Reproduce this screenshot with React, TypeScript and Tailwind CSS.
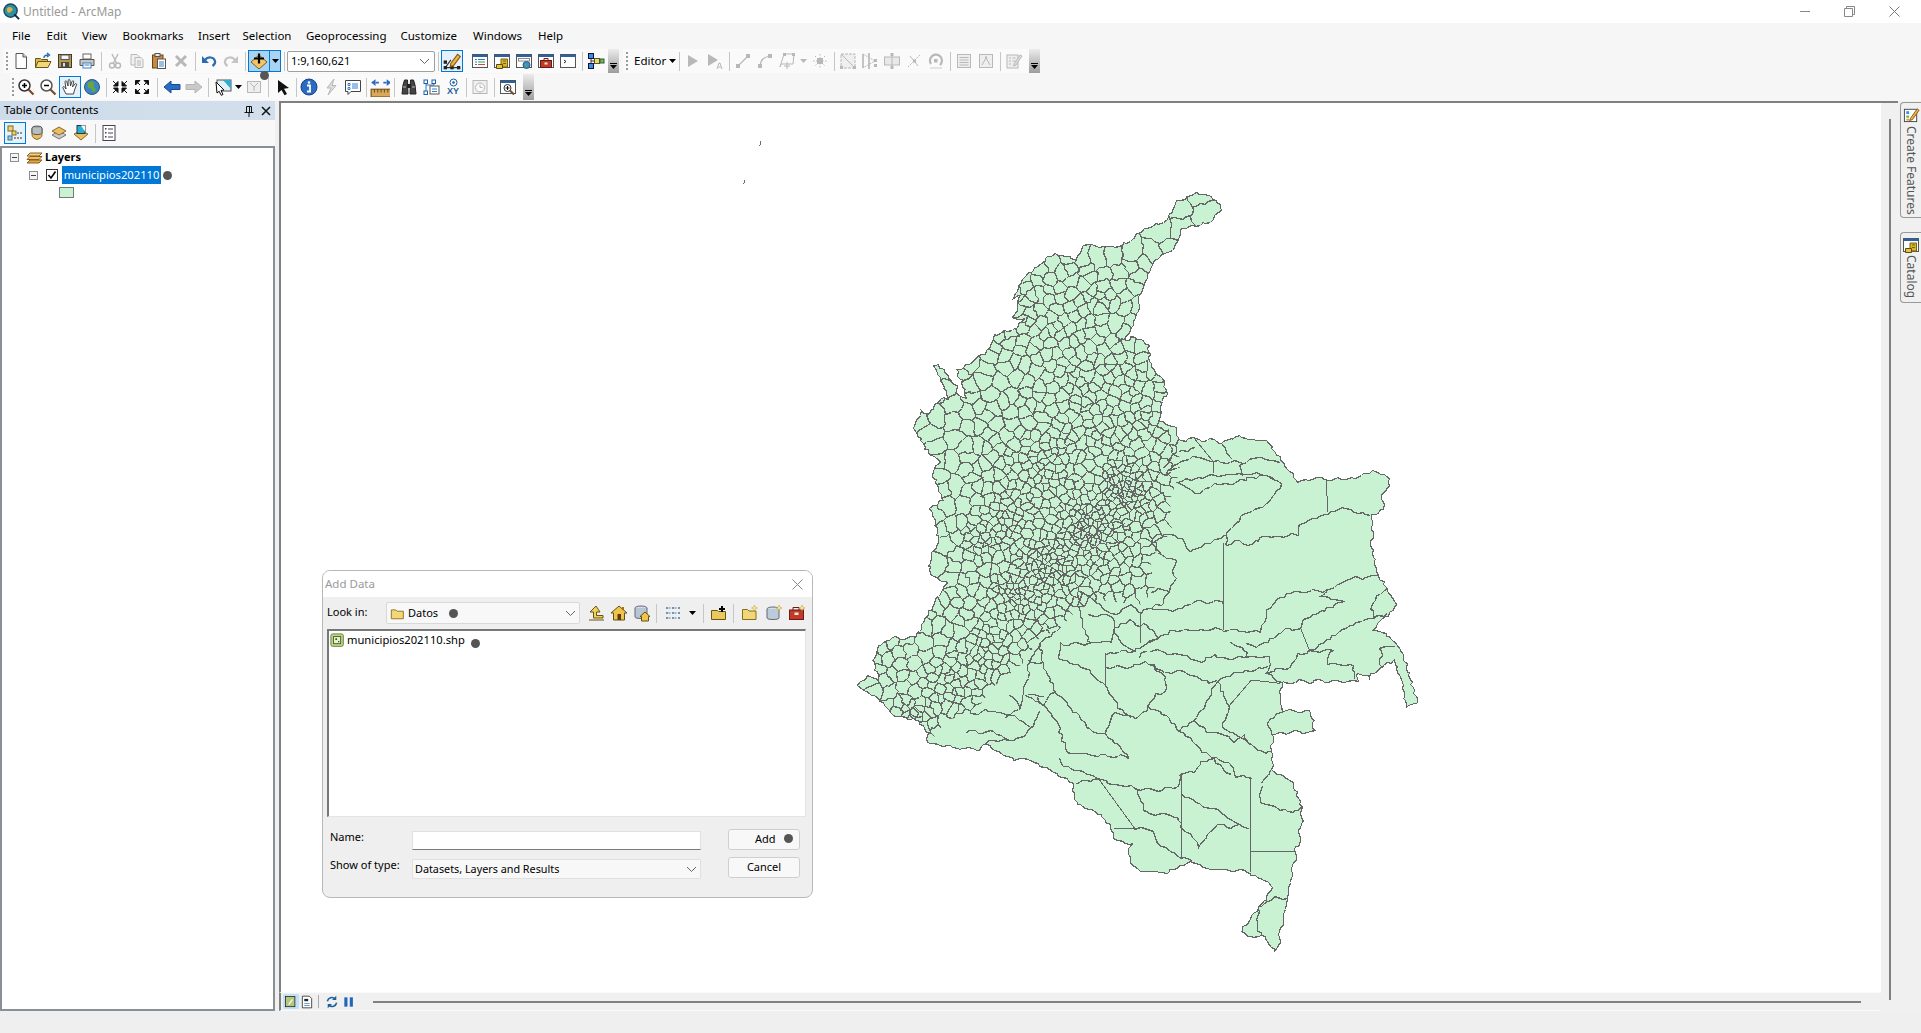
import React, { useMemo } from "react";

type Pt = [number, number];
const tr = (ox: number, oy: number, sx: number, sy: number) => (a: number[]): Pt[] => {
  const o: Pt[] = [];
  for (let i = 0; i < a.length; i += 2) o.push([ox + a[i] / sx, oy + a[i + 1] / sy]);
  return o;
};
const z7 = tr(850, 170, 3, 3);
const z9 = tr(1150, 400, 3, 3);
const z8 = tr(840, 560, 2.613, 3);

const OUTLINE: Pt[] = [
  ...z7([1040,65,1080,75,1100,95,1112,120,1085,150,1030,170,995,170,965,245,930,250,905,285,890,315,870,365,860,440,835,490,810,515,855,500,890,525,905,590,940,625,945,675,930,700,930,755,970,765]),
  ...z9([85,118,135,115,215,125,265,110,355,125,395,180,445,245,490,232,560,237,610,232,665,215,712,225,720,255,695,285,695,330,665,345,665,460,685,525,710,562,740,615,665,690,705,695,755,750,770,810,805,905,770,918,765,895,735,780,695,800,660,830,625,815,620,843,450,843,390,848]),
  ...z8([1150,450,1225,453,1237,480,1237,515,1180,515,1128,522,1128,625,1180,670,1205,740,1205,790,1140,1175,1105,1125,1075,1130,1048,1118,1125,985,1120,965,1070,935,965,925,920,900,850,938,780,930,752,900,760,850,710,830,710,800,680,765,620,735,605,670,510,605,440,590,375,545,365,568,280,560,230,543,230,515,205,485,140,460,110,430,50,375,70,350,100,355,88,300,100,260,135,235,200,230,215,185,230,150,250,125,280,70,240,40,232,15]),
  ...z7([235,1190,265,1100,240,1015,280,990,245,915,265,870,235,850,190,775,210,715,235,735,270,685,295,680,270,630,250,590,265,580,320,650,325,680,345,680,335,640,320,597,365,575,420,530,440,490,500,475,520,445,490,440,510,370,490,380,520,320,610,252,680,265,695,225,740,225,780,230,830,220,880,175,945,155,975,100]),
];

const RIVERS: Pt[][] = [
  [660,345,575,320,520,345,450,372,440,400,400,410,340,408,305,432,265,422,222,432,232,392,280,345,350,312,390,250],
  [390,250,340,222,260,245,190,255,135,283,95,255,85,245,160,228,240,222,340,220,380,245],
  [685,525,600,535,530,570,430,575,380,600,350,630,330,690,290,695,210,685,130,690,70,690,0,725],
  [242,725,290,755,285,770,360,770,350,820,390,848],
  [0,625,70,630,130,605,210,605,220,615],
  [75,480,65,515,75,530,55,570,40,610],
  [0,570,50,570],
  [122,452,230,400],
  [122,452,95,420,45,400,13,420,30,465,75,480],
  [578,600,510,590,530,570],
  [578,600,510,635,452,665,452,685,405,690,370,712,330,735,290,735],
  [480,755,575,690,620,670,665,650,710,640],
  [480,755,545,748,530,790,610,795,610,830],
  [480,755,440,760,415,805,355,810,350,820],
  [710,562,665,610,670,650,710,640],
  [690,740,690,790,695,800],
  [690,740,730,738],
  [0,750,100,765,150,785,190,765,210,775,280,770],
  [0,790,40,820],
  [40,820,90,808,180,845,250,820,350,800],
  [85,118,75,155,45,200],
  [85,155,135,140],
  [190,185,275,185,270,225],
  [275,190,310,170,395,185],
  [215,125,230,155,245,180],
  [45,220,80,190,140,165,190,185],
].map(z9).concat([
  [845,130,785,155,755,130,720,160],
  [715,205,755,180,785,200,790,190,830,230],
  [715,205,735,250,765,270,830,230],
  [695,280,765,270],
  [695,320,760,320,800,305,845,345],
  [775,295,800,270],
  [845,345,855,390,825,400,805,440,770,475,715,455,695,520,660,515,610,450,560,395,530,310,520,250,575,205],
  [570,290,575,250,655,250,710,240,715,205],
  [695,380,650,330,570,290],
  [695,380,730,440,760,475],
  [805,440,840,460,890,510,945,570,1020,610,1030,645,1075,655],
  [985,365,950,445,890,510],
  [985,365,1015,440,1000,500,1065,550,1110,580,1127,570],
  [920,480,955,515,1005,520,1030,540,1055,520,1065,550],
  [695,520,755,590,680,585,590,575,570,490,530,430,515,410],
  [570,590,575,610,670,655,750,680,830,690,880,680,890,640,925,635,945,600,975,600,1020,640],
  [610,670,675,655],
  [770,680,800,755,880,770,890,800,940,855,980,795,1070,800],
  [893,700,945,740,985,745,1040,790],
  [770,805,810,805,830,850,890,895,920,900],
  [1090,1040,1135,1015,1168,1012],
  [1100,680,1095,730,1125,735,1180,755,1205,740],
  [500,505,470,535,380,545],
  [330,515,400,515,440,535],
  [1127,625,1100,665],
  [1150,450,1115,485,1128,522],
  [1090,1040,1090,1110,1105,1125],
  [620,100,630,190,655,250],
  [650,165,705,165,720,205],
  [620,85,700,155,720,160],
  [520,250,495,290,490,340,480,385,470,440],
  [530,310,490,300],
  [560,395,530,430,480,400],
  [345,460,400,450,470,480,500,505],
  [500,505,520,460],
  [490,400,530,410],
  [440,400,470,440,430,470],
].map(z8));

const STRAIGHT: Pt[][] = [
  z9([530,237,532,335]), z9([220,430,220,690]), z9([452,685,480,755]), z9([135,118,190,185,190,220]),
  z8([785,155,785,250]), z8([695,280,695,380]), z8([1015,440,1075,360,1150,370]),
  z8([675,655,770,805,715,805]), z8([893,640,893,895]), z8([1073,655,1073,935]), z8([1073,873,1188,873]),
];

const DENSE: Pt[] = [[1160,420],[1178,439],[1180,470],[1170,500],[1172,530],[1150,560],[1155,590],[1140,605],[1100,600],[1077,610],[1060,628],[1037,640],[1027,660],[993,687],[974,713],[947,720],[928,745],[850,700],[840,500],[1000,180],[1250,180]];

const wobble = (x: number, y: number): Pt => {
  const dx = 1.1 * Math.sin(0.83 * x + 0.47 * y) + 0.8 * Math.sin(0.29 * y - 0.41 * x + 1);
  const dy = 1.1 * Math.sin(0.71 * y - 0.37 * x + 2) + 0.8 * Math.sin(0.33 * x + 0.53 * y);
  return [x + dx, y + dy];
};
const rp = (p: Pt) => `${Math.round(p[0]) + 0.5} ${Math.round(p[1]) + 0.5}`;
const wavy = (pts: Pt[], closed = false, step = 4) => {
  let d = "";
  const list = closed ? [...pts, pts[0]] : pts;
  list.forEach((p, i) => {
    if (i === 0) { d += "M" + rp(wobble(p[0], p[1])); return; }
    const q = list[i - 1];
    const n = Math.max(1, Math.round(Math.hypot(p[0] - q[0], p[1] - q[1]) / step));
    for (let k = 1; k <= n; k++) {
      const x = q[0] + ((p[0] - q[0]) * k) / n;
      const y = q[1] + ((p[1] - q[1]) * k) / n;
      d += "L" + rp(wobble(x, y));
    }
  });
  return closed ? d + "Z" : d;
};
const inside = (x: number, y: number, poly: Pt[]) => {
  let c = false;
  for (let i = 0, j = poly.length - 1; i < poly.length; j = i++) {
    const [xi, yi] = poly[i], [xj, yj] = poly[j];
    if (yi > y !== yj > y && x < ((xj - xi) * (y - yi)) / (yj - yi) + xi) c = !c;
  }
  return c;
};
const SPOTS = [[1125,490,30,1],[1090,530,38,1],[1050,565,36,0.95],[1015,590,30,0.9],[1010,520,28,0.8],[985,540,22,0.8],[1040,470,34,0.7],[1090,440,40,0.6],[915,715,14,1],[950,680,26,0.7],[985,650,25,0.75],[1080,385,40,0.45],[1040,320,40,0.4],[1115,380,25,0.5],[1140,420,20,0.6],[1075,300,30,0.45]];
const radius = (x: number, y: number) => {
  let g = 0;
  for (const [a, b, s, w] of SPOTS) g = Math.max(g, w * Math.exp(-((x - a) ** 2 + (y - b) ** 2) / (2 * s * s)));
  const base = y < 255 ? 34 : x < 965 && y < 590 ? 24 : 18;
  return base * (1 - g) + 3.5 * g;
};
function buildCells() {
  let st = 123456;
  const rnd = () => {
    st |= 0; st = (st + 0x6d2b79f5) | 0;
    let t = Math.imul(st ^ (st >>> 15), 1 | st);
    t = (t + Math.imul(t ^ (t >>> 7), 61 | t)) ^ t;
    return ((t ^ (t >>> 14)) >>> 0) / 4294967296;
  };
  const seeds: Pt[] = [];
  for (let i = 0; i < 36000; i++) {
    const x = 850 + rnd() * 380, y = 190 + rnd() * 570;
    if (!inside(x, y, DENSE) || !inside(x, y, OUTLINE)) continue;
    const r = (radius(x, y) * (0.5 + 0.65 * rnd())) ** 2;
    let ok = true;
    for (const s of seeds) {
      if ((s[0] - x) ** 2 + (s[1] - y) ** 2 < r) { ok = false; break; }
    }
    if (ok) seeds.push([x, y]);
  }
  let d = "";
  for (const s of seeds) {
    const near = seeds.filter((q) => q !== s).map((q) => ({ q, v: (q[0] - s[0]) ** 2 + (q[1] - s[1]) ** 2 })).sort((a, b) => a.v - b.v).slice(0, 22);
    let poly: Pt[] = [[s[0] - 60, s[1] - 60], [s[0] + 60, s[1] - 60], [s[0] + 60, s[1] + 60], [s[0] - 60, s[1] + 60]];
    for (const { q } of near) {
      const mx = (s[0] + q[0]) / 2, my = (s[1] + q[1]) / 2, nx = q[0] - s[0], ny = q[1] - s[1];
      const f = (p: Pt) => (p[0] - mx) * nx + (p[1] - my) * ny;
      const out: Pt[] = [];
      poly.forEach((p, i) => {
        const n = poly[(i + 1) % poly.length];
        const a = f(p), b = f(n);
        if (a <= 0) out.push(p);
        if (a < 0 !== b < 0) { const t = a / (a - b); out.push([p[0] + (n[0] - p[0]) * t, p[1] + (n[1] - p[1]) * t]); }
      });
      poly = out;
      if (!poly.length) break;
    }
    if (poly.length) d += wavy(poly, true, 4);
  }
  return d;
}
const path = (pts: Pt[]) => "M" + pts.map((p) => `${p[0]} ${p[1]}`).join("L");

function MapDrawing() {
  const cells = useMemo(buildCells, []);
  const outline = useMemo(() => wavy(OUTLINE, true, 3), []);
  const rivers = useMemo(() => RIVERS.map((r) => wavy(r, false, 4)).join(""), []);
  const straight = useMemo(() => STRAIGHT.map(path).join(""), []);
  return (
    <svg width={1598} height={889} viewBox="281 103 1598 889" className="block" shapeRendering="crispEdges">
      <defs>
        <clipPath id="cn"><path d={outline} /></clipPath>
        <clipPath id="dn"><path d={path(DENSE) + "Z"} /></clipPath>
      </defs>
      <path d={outline} fill="#c8f2d2" />
      <g clipPath="url(#cn)" fill="none" stroke="#666666" strokeWidth="1.3">
        <g clipPath="url(#dn)"><path d={cells} /></g>
        <path d={rivers} />
        <path d={straight} strokeWidth="1" />
      </g>
      <path d={outline} fill="none" stroke="#666666" strokeWidth="1.2" />
      <path d="M760 141l1 3-2 2M744 180l1 2-2 2" fill="none" stroke="#6e6e6e" />
    </svg>
  );
}

const S = ({ children, s = 18 }: { children: React.ReactNode; s?: number }) => (
  <svg width={s} height={s} viewBox="0 0 18 18" className="block shrink-0">{children}</svg>
);
const Win = ({ children }: { children?: React.ReactNode }) => (
  <g><rect x="1.5" y="2.5" width="15" height="13" fill="#fff" stroke="#555" /><rect x="1.5" y="2.5" width="15" height="2.5" fill="#2f5f9e" />{children}</g>
);
const Folder = () => <path d="M1.5 15.5v-10h5l1.5 1.500h7v8.500z" fill="#f1d777" stroke="#8a6d1c" />;
const Stack = ({ c = "#e9bd62" }: { c?: string }) => (
  <g><path d="M9 7l7 4-7 4-7-4z" fill="#c9c9c9" stroke="#777" /><path d="M9 3l7 4-7 4-7-4z" fill={c} stroke="#8c6b24" /></g>
);
const G = "#b8b8b8";
const Ic: Record<string, React.ReactNode> = {
  new: <S><path d="M4 1.500h7l3.500 3.500v11.500H4z" fill="#fff" stroke="#555" /><path d="M11 1.500V5h3.500" fill="#ddd" stroke="#555" /></S>,
  open: <S><path d="M1.500 15.500v-9h5l1 1h6v8z" fill="#d9b84c" stroke="#6f5514" /><path d="M1.500 15.500l2.500-6h13l-3 6z" fill="#f0d77a" stroke="#6f5514" /><path d="M10 6c0-2 1.500-3 4-3M13 1l2.500 2-2.500 2" fill="none" stroke="#2a6cb0" strokeWidth="1.400" /></S>,
  save: <S><rect x="2.500" y="2.500" width="13" height="13" fill="#b99a45" stroke="#3a3a3a" /><rect x="5" y="3" width="8" height="4.500" fill="#f4f4f4" stroke="#555" /><rect x="5" y="10" width="8" height="5.500" fill="#4b4b4b" /><rect x="7" y="11" width="2" height="3.500" fill="#ddd" /></S>,
  print: <S><rect x="5" y="2" width="8" height="5" fill="#fff" stroke="#666" /><path d="M2 7.500h14v6H2z" fill="#c7c7c7" stroke="#555" /><rect x="5" y="11" width="8" height="5" fill="#fff" stroke="#3b7fc4" /><path d="M6.500 13h5" stroke="#3b7fc4" /></S>,
  cut: <S><path d="M6 2l4.500 9M12 2L7.500 11" stroke={G} strokeWidth="1.400" fill="none" /><circle cx="6" cy="13.500" r="2.500" fill="none" stroke={G} strokeWidth="1.400" /><circle cx="12" cy="13.500" r="2.500" fill="none" stroke={G} strokeWidth="1.400" /></S>,
  copy: <S><path d="M3 2.500h6l2 2v8.500H3z" fill="#f1f1f1" stroke={G} /><path d="M7 5.500h6l2 2v8H7z" fill="#f1f1f1" stroke={G} /><path d="M9 9h4M9 11h4M9 13h4" stroke={G} /></S>,
  paste: <S><rect x="2.500" y="3" width="10.500" height="13" fill="#c98a3d" stroke="#6b4516" /><rect x="5" y="1.500" width="5" height="3" fill="#e9e9e9" stroke="#555" /><rect x="7.500" y="7" width="8" height="9.500" fill="#fff" stroke="#555" /><path d="M9 10h5M9 12h5M9 14h5" stroke="#3b7fc4" /></S>,
  del: <S><path d="M4 4l10 10M14 4L4 14" stroke={G} strokeWidth="3" /></S>,
  undo: <S><path d="M5 8c3-4 9-3 10 1 .5 2-1 4-2.500 5" fill="none" stroke="#2a6cb0" strokeWidth="2.200" /><path d="M2 4v7h7z" fill="#2a6cb0" /></S>,
  redo: <S><path d="M13 8c-3-4-9-3-10 1-.5 2 1 4 2.500 5" fill="none" stroke="#c4c4c4" strokeWidth="2.200" /><path d="M16 4v7H9z" fill="#c4c4c4" /></S>,
  add: <S><path d="M9 3l8 7-8 7-8-7z" fill="#f2c566" stroke="#7d5e1b" /><path d="M9 1.500v10M4 6.500h10" stroke="#000" strokeWidth="2.200" /></S>,
  editor: <S s={20}><path d="M3 15L8 15 14 15M3 15L8 8" stroke="#333" fill="none" /><rect x="1.500" y="8.500" width="3" height="3" fill="#222" /><rect x="1.500" y="13.500" width="3" height="3" fill="#222" /><rect x="7.500" y="13.500" width="3" height="3" fill="#222" /><rect x="13.500" y="13.500" width="3" height="3" fill="#222" /><path d="M8 11l6-8 2.500 2-6 8-3 1z" fill="#eeb44a" stroke="#8a5b12" /></S>,
  toc: <S><Win><path d="M4 7.500h2M4 10h2M4 12.500h2" stroke="#2f7fd0" /><path d="M7 7.500h7" stroke="#2f7fd0" /><path d="M7 10h7" stroke="#37a04a" /><path d="M7 12.500h7" stroke="#d24a3d" /></Win></S>,
  cat: <S><Win><path d="M8 7h6.500v8H8z" fill="#d9b52c" stroke="#7a6310" /><path d="M3.500 12.500h6v4h-6z" fill="#e6c53a" stroke="#5a4a10" /><path d="M10 9h3M10 11.500h3" stroke="#7a6310" /></Win></S>,
  search: <S><Win><rect x="3.500" y="6.500" width="11" height="2.500" fill="#fff" stroke="#8a8a8a" /><circle cx="11.500" cy="13" r="3.500" fill="#3b8fc4" stroke="#2a5a7c" /><path d="M10 11.500l2 1.500-1 2z" fill="#6bb04a" /></Win></S>,
  tool: <S><Win><rect x="3.500" y="8.500" width="11" height="7" fill="#c2392b" stroke="#6d1a12" /><path d="M7 8.500v-2h4v2" fill="none" stroke="#6d1a12" /><rect x="7.500" y="10.500" width="3" height="2" fill="#eec" /></Win></S>,
  py: <S><Win><path d="M5 8l2 1.500L5 11" fill="none" stroke="#222" /></Win></S>,
  model: <S><rect x="1.500" y="1.500" width="5" height="5" fill="#3a8fe0" stroke="#114" /><rect x="1.500" y="11.500" width="5" height="5" fill="#3a8fe0" stroke="#114" /><rect x="7.500" y="6.500" width="5" height="5" fill="#f2d94f" stroke="#554" /><rect x="13" y="7" width="4" height="4" fill="#6cc04a" stroke="#354" /><path d="M4 6.500v5M4 9h3.500" stroke="#333" /></S>,
  zin: <S><circle cx="7.500" cy="7.500" r="5.500" fill="#fff" stroke="#333" strokeWidth="1.500" /><path d="M5 7.500h5M7.500 5v5" stroke="#000" strokeWidth="1.500" /><path d="M11.500 11.500l5 5" stroke="#7a4a2a" strokeWidth="2.200" /></S>,
  zout: <S><circle cx="7.500" cy="7.500" r="5.500" fill="#fff" stroke="#555" strokeWidth="1.500" /><path d="M5 7.500h5" stroke="#000" strokeWidth="1.500" /><path d="M11.500 11.500l5 5" stroke="#7a4a2a" strokeWidth="2.200" /></S>,
  hand: <S><path d="M5 16L2 10c-.6-1.300 1-2 1.800-.8L5 11 4 4c-.2-1.300 1.500-1.500 1.800-.2L7 8l.2-5.500c0-1.300 1.800-1.300 1.800 0L9.500 8l1.500-4.500c.4-1.200 2-.8 1.700.5L11.500 9l2.500-3c.8-1 2-.1 1.500 1L13.500 12 12.500 16z" fill="#fff" stroke="#333" strokeWidth=".9" /></S>,
  globe: <S><circle cx="9" cy="9" r="7.500" fill="#3b87c6" stroke="#33566e" /><path d="M5 5c2-2 5-2 6 0s-1 2 0 4 3 2 1 4-3 1-3-1-3-1-4-3 0-2 0-4z" fill="#6aa63f" /></S>,
  fin: <S><path d="M2 3l5 5M7 3.500V8H2.500z" fill="#111" stroke="#111" /><path d="M16 3l-5 5M11 3.500V8h4.500z" fill="#111" stroke="#111" /><path d="M2 15l5-5M7 14.500V10H2.500z" fill="#111" stroke="#111" /><path d="M16 15l-5-5M11 14.500V10h4.500z" fill="#111" stroke="#111" /></S>,
  fout: <S><path d="M7 7L3 3M2.500 7V2.500H7z" fill="#111" stroke="#111" /><path d="M11 7l4-4M15.500 7V2.500H11z" fill="#111" stroke="#111" /><path d="M7 11l-4 4M2.500 11v4.500H7z" fill="#111" stroke="#111" /><path d="M11 11l4 4M15.500 11v4.500H11z" fill="#111" stroke="#111" /></S>,
  back: <S><path d="M1 9l7-6v3.500h9v5H8V15z" fill="#2a6cc4" stroke="#1a4a90" /></S>,
  fwd: <S><path d="M17 9l-7-6v3.500H1v5h9V15z" fill="#c9c9c9" stroke="#b5b5b5" /></S>,
  sel: <S><rect x="3" y="2" width="14" height="11" fill="#dff0f7" stroke="#555" /><path d="M9 2h8v9z" fill="#36a9cf" /><path d="M2 4l8 8-3 .5 2 4-1.800.8-2-4L3 15z" fill="#fff" stroke="#111" /></S>,
  clr: <S><rect x="2.500" y="3.500" width="13" height="11" fill="#eee" stroke={G} /><path d="M5 5l4 4 4-4M9 9v4" fill="none" stroke={G} /></S>,
  arrow: <S><path d="M4 2l11 8-5 .8 3 5.200-2.500 1.300-3-5.300L4 15z" fill="#111" /></S>,
  info: <S><circle cx="9" cy="9" r="8" fill="#2a6cc4" stroke="#1a4080" /><path d="M7 7.500h3v6h1M7 13.500h4" fill="none" stroke="#fff" strokeWidth="1.800" /><circle cx="9" cy="4.500" r="1.300" fill="#fff" /></S>,
  light: <S><path d="M12 1L5 10h4l-3 7 8-9.500h-4z" fill="#ddd" stroke={G} /></S>,
  html: <S><path d="M1.500 2.500h15v11H7l-3 3v-3H1.500z" fill="#fff" stroke="#444" /><path d="M4 5.500h2v2H4zM4 9.500h2v2H4z" fill="none" stroke="#2f7fd0" /><path d="M8 6h6M8 8h6M8 10h6" stroke="#2f7fd0" /></S>,
  measure: <S s={20}><rect x="1" y="11" width="18" height="7" fill="#d9a85a" stroke="#70501c" /><path d="M4 11v3M7 11v3M10 11v3M13 11v3M16 11v3" stroke="#70501c" /><path d="M1 5l4-3v6zM19 5l-4-3v6z" fill="#2a6cc4" /><path d="M5 5h3M12 5h3" stroke="#2a6cc4" strokeWidth="1.500" /></S>,
  bino: <S><path d="M2 16l1-9 1.500-5h3L8 16zM16 16l-1-9-1.500-5h-3L10 16z" fill="#444" stroke="#222" /><path d="M7 6h4v4H7z" fill="#222" /><path d="M3 9h3M12 9h3" stroke="#bbb" /></S>,
  route: <S><path d="M4 4v9M4 7h8v-3" fill="none" stroke="#2f7fd0" /><rect x="2" y="2" width="3.500" height="3.500" fill="#fff" stroke="#1d5fa8" /><rect x="2" y="13" width="3.500" height="3.500" fill="#fff" stroke="#1d5fa8" /><rect x="10" y="2" width="3.500" height="3.500" fill="#fff" stroke="#1d5fa8" /><rect x="8" y="8" width="9" height="8" fill="#fff" stroke="#555" /><path d="M10 11h5M10 13.500h5" stroke="#2f7fd0" /></S>,
  time: <S><rect x="2" y="2.500" width="14" height="13" fill="#f0f0f0" stroke={G} /><circle cx="9" cy="9.500" r="4.500" fill="#fafafa" stroke={G} /><path d="M9 6.500v3h2.500" fill="none" stroke={G} /></S>,
  viewer: <S><Win><circle cx="8.500" cy="10" r="3.500" fill="#fff" stroke="#333" /><path d="M6.500 10h4M8.500 8v4" stroke="#111" /><path d="M11 12.500l4 4" stroke="#7a4a2a" strokeWidth="2" /></Win></S>,
  t1: <S><rect x="2" y="2" width="5" height="5" fill="#f5d267" stroke="#7a6a2a" /><rect x="6" y="7" width="4" height="4" fill="#f5d267" stroke="#7a6a2a" /><rect x="2" y="12" width="4" height="4" fill="#9ac7e0" stroke="#48708a" /><path d="M11 9h5M8 14h8" stroke="#333" strokeDasharray="2 1" /></S>,
  t2: <S><path d="M4 4.500v6c0 3 2 4 5 5 3-1 5-2 5-5v-6z" fill="#e9bd62" stroke="#8c6b24" /><ellipse cx="9" cy="4" rx="5" ry="2" fill="#a8a8a8" stroke="#555" /><path d="M4 4v5c0 2 10 2 10 0V4" fill="#b9bcc0" stroke="#555" /></S>,
  t3: <S><Stack /></S>,
  t4: <S><path d="M2 10l7 6 7-6-4-2v-2H6v2z" fill="#e9bd62" stroke="#8c6b24" /><rect x="5" y="1.500" width="8" height="8" fill="#26b0d8" stroke="#333" /><path d="M9 1.500h4v6z" fill="#fff" /></S>,
  t5: <S><rect x="3" y="1.500" width="12" height="15" fill="#fff" stroke="#445" /><path d="M8 5h5M8 9h5M8 13h5" stroke="#445" /><rect x="5" y="4" width="1.500" height="1.500" fill="#445" /><rect x="5" y="8" width="1.500" height="1.500" fill="#445" /><rect x="5" y="12" width="1.500" height="1.500" fill="#445" /></S>,
  layers: <S s={18}><path d="M2 15l3-3h12l-3 3z" fill="#e0a64a" stroke="#8a5f1c" /><path d="M2 11.500l3-3h12l-3 3z" fill="#efbf6c" stroke="#8a5f1c" /><path d="M2 8l3-3h12l-3 3z" fill="#f4cd80" stroke="#8a5f1c" /></S>,
  up: <S><path d="M9 2L3 8h3.500v6H16v-2.500H9.500V8H13z" fill="#f0d25a" stroke="#6a5510" /><path d="M2 16h15" stroke="#6a5510" /></S>,
  home: <S><path d="M9 2L1 9h2.500v7h11V9H17z" fill="#edc54c" stroke="#6a4e10" /><rect x="7.500" y="10" width="3.500" height="6" fill="#5b3b10" /><rect x="12" y="3" width="2" height="3" fill="#a0701c" /></S>,
  gdbh: <S><ellipse cx="8" cy="4" rx="6" ry="2" fill="#cfdbe6" stroke="#667" /><path d="M2 4v9c0 2 12 2 12 0V4" fill="#b7c5d2" stroke="#667" /><path d="M12 8l-5 4.500h1.500V17h7v-4.500H17z" fill="#edc54c" stroke="#6a4e10" /></S>,
  list: <S><path d="M2 3h2v2H2zM2 8h2v2H2zM2 13h2v2H2zM8 3h2v2H8zM8 8h2v2H8zM8 13h2v2H8zM14 3h2v2h-2zM14 8h2v2h-2zM14 13h2v2h-2z" fill="#7b93a8" /><path d="M4.500 4h2M4.500 9h2M4.500 14h2M10.500 4h2M10.500 9h2M10.500 14h2" stroke="#3b7fc4" /></S>,
  conn: <S><path d="M1.500 15.500v-9h6l1 1h7v8z" fill="#e7c95f" stroke="#6a5510" /><path d="M9 5h6M12 2v6" stroke="#000" strokeWidth="2" /></S>,
  nfold: <S><Folder /><path d="M13.500 1l.8 2.200 2.200.8-2.200.8-.8 2.200-.8-2.200-2.200-.8 2.200-.8z" fill="#fff2a0" stroke="#b59a20" strokeWidth=".5" /></S>,
  ndb: <S><ellipse cx="8" cy="5" rx="6" ry="2" fill="#d3deea" stroke="#667" /><path d="M2 5v9c0 2 12 2 12 0V5" fill="#bccbd8" stroke="#667" /><path d="M14 1l.8 2.200 2.200.8-2.200.8-.8 2.200-.8-2.200-2.200-.8 2.200-.8z" fill="#fff2a0" stroke="#b59a20" strokeWidth=".5" /></S>,
  ntool: <S><rect x="1.500" y="6" width="14" height="9.500" fill="#c2392b" stroke="#6d1a12" /><path d="M5 6V3.500h6V6" fill="none" stroke="#6d1a12" /><rect x="6.500" y="8.500" width="4" height="2.500" fill="#eec" /><path d="M14 1l.8 2.200 2.200.8-2.200.8-.8 2.200-.8-2.200-2.200-.8 2.200-.8z" fill="#fff2a0" stroke="#b59a20" strokeWidth=".5" /></S>,
  shp: <S s={16}><rect x="1" y="1" width="14" height="14" rx="2" fill="#bcd58e" stroke="#5d7a2c" /><rect x="4" y="4" width="8" height="8" fill="#e6efce" stroke="#46591f" /><path d="M6 6h2v2H6zM9 9h1.500v1.500H9z" fill="#46591f" /></S>,
  view1: <S s={14}><rect x="2" y="2" width="12" height="13" fill="#b6c77a" stroke="#222" /><path d="M5 12l5-7 2 1-5 7z" fill="#e8f0d0" /></S>,
  view2: <S s={14}><path d="M3 1.500h9l3 3v12H3z" fill="#fff" stroke="#222" /><path d="M5.500 5h5v3h-5z" fill="#222" /><path d="M5.500 11h7M5.500 13.500h7" stroke="#3b7fc4" /></S>,
  refresh: <S s={14}><path d="M3 8a6 6 0 0 1 10-3M15 10a6 6 0 0 1-10 3" fill="none" stroke="#1b5f9e" strokeWidth="2" /><path d="M14.500 1v5.500H9zM3.500 17v-5.500H9z" fill="#1b5f9e" /></S>,
  pause: <S s={14}><rect x="3" y="3" width="4" height="12" fill="#2266b8" /><rect x="10" y="3" width="4" height="12" fill="#2266b8" /></S>,
  feat: <S s={17}><rect x="1.500" y="3.500" width="13" height="13" fill="#fff" stroke="#445" /><path d="M3.500 5.500h3v3h-3z" fill="#3a8fe0" /><path d="M3.500 10h3v2.500h-3z" fill="#6cc04a" /><path d="M3.500 13.500h3v2h-3z" fill="#e0a030" /><path d="M8 13l7-10 2 1.500-7 10-3 .8z" fill="#eeb44a" stroke="#8a5b12" /></S>,
  e1: <S><path d="M4 3l10 6-10 6z" fill={G} /></S>,
  e2: <S><path d="M2 2l10 6-10 6z" fill={G} /><path d="M11 17l2-6h1l2 6M12 15h3" fill="none" stroke={G} /></S>,
  e3: <S><path d="M4 14L14 4" stroke={G} strokeWidth="1.200" /><rect x="2" y="12" width="4" height="4" fill={G} /><rect x="12" y="2" width="4" height="4" fill={G} /></S>,
  e4: <S><path d="M4 14C5 7 8 5 14 4" stroke={G} fill="none" strokeWidth="1.200" /><rect x="2" y="12" width="4" height="4" fill={G} /><rect x="12" y="2" width="4" height="4" fill={G} /></S>,
  e5: <S><path d="M6 2h10l-1 10H3l-1 3z" fill="none" stroke={G} /><path d="M9 10v7M6 14h6" stroke={G} /><rect x="5" y="1" width="3" height="3" fill={G} /><rect x="14" y="1" width="3" height="3" fill={G} /></S>,
  e6: <S><path d="M9 2v14M2 9h14M4 4l10 10M14 4L4 14" stroke={G} strokeDasharray="1.500 1.500" /><rect x="6" y="6" width="6" height="6" fill={G} /></S>,
  e7: <S><path d="M2 2h14v14H2z" fill="#efefef" stroke={G} strokeDasharray="3 1" /><path d="M2 2l14 14" stroke={G} /><rect x="1" y="14" width="3" height="3" fill={G} /><rect x="14" y="14" width="3" height="3" fill={G} /></S>,
  e8: <S><path d="M2 2v14M8 1v16" stroke="#8d8d8d" /><path d="M2 2l12 7-12 7" fill="none" stroke={G} strokeDasharray="2 1" /><rect x="13" y="7" width="3" height="3" fill={G} /><rect x="13" y="12" width="3" height="3" fill={G} /></S>,
  e9: <S><rect x="1.500" y="5" width="15" height="8" fill="#e9e9e9" stroke={G} /><path d="M9 2v14" stroke={G} /><rect x="7.500" y="1" width="3" height="3" fill={G} /><rect x="7.500" y="14" width="3" height="3" fill={G} /></S>,
  e10: <S><path d="M3 15L15 3" stroke={G} strokeDasharray="2 1" /><path d="M5 4l8 10" stroke={G} /><rect x="8" y="7.500" width="3" height="3" fill={G} /></S>,
  e11: <S><path d="M4 12A6 6 0 1 1 13 13" fill="none" stroke={G} strokeWidth="2.200" /><rect x="7" y="7" width="3.500" height="3.500" fill={G} /><path d="M3 16h12" stroke="#ddd" strokeWidth="1.500" /></S>,
  e12: <S><rect x="2.500" y="2.500" width="13" height="13" fill="#eee" stroke={G} /><path d="M4.500 5.500h9M4.500 8h9M4.500 10.500h9M4.500 13h9" stroke={G} /></S>,
  e13: <S><rect x="2.500" y="2.500" width="13" height="13" fill="#eee" stroke={G} /><path d="M5 13l4-7 4 7" fill="none" stroke={G} /><rect x="8" y="4.500" width="2" height="2" fill={G} /></S>,
  e14: <S><rect x="2" y="3" width="11" height="13" fill="#eee" stroke={G} /><path d="M4 6h2M4 9h2M4 12h2M7.500 6h3M7.500 9h3" stroke={G} /><path d="M9 12l6-9 2 1-6 9-2.500.8z" fill="#ddd" stroke={G} /></S>,
};

const Btn = ({ n, w = 22, active = false }: { n: string; w?: number; active?: boolean }) => (
  <div className={"h-[22px] shrink-0 flex items-center justify-center " + (active ? "border border-[#0078d7] bg-[#e5f1fb]" : "")} style={{ width: w }}>
    {Ic[n]}
  </div>
);
const Sep = ({ w = 6 }: { w?: number }) => (
  <div className="shrink-0 flex justify-center" style={{ width: w }}><div className="w-px h-[19px] bg-[#c6c6c6]" /></div>
);
const Caret = ({ c = "#000" }: { c?: string }) => (
  <svg width="9" height="5" viewBox="0 0 9 5" className="shrink-0"><path d="M1 0h7L4.500 4z" fill={c} /></svg>
);
const Chev = () => (
  <svg width="11" height="7" viewBox="0 0 11 7" className="shrink-0"><path d="M1 1l4.500 4.500L10 1" fill="none" stroke="#666" /></svg>
);
const Grip = ({ w = 7 }: { w?: number }) => (
  <div className="shrink-0 flex flex-col items-center gap-[2px]" style={{ width: w }}>
    {[0, 1, 2, 3, 4].map((i) => <div key={i} className="w-[2px] h-[2px] bg-[#9a9a9a]" />)}
  </div>
);
const Overflow = ({ cls }: { cls: string }) => (
  <div className={"w-[11px] shrink-0 bg-gradient-to-b from-[#ececec] to-[#9d9d9d] flex flex-col items-center justify-end pb-[3px] " + cls}>
    <div className="w-[7px] h-px bg-black mb-[1px]" />
    <Caret />
  </div>
);
const Dot = ({ cls = "" }: { cls?: string }) => <span className={"inline-block w-[9px] h-[9px] rounded-full bg-[#555] shrink-0 " + cls} />;
const Minus = () => (
  <div className="w-[9px] h-[9px] border border-[#8a8f96] bg-[#f4f4f4] flex items-center justify-center shrink-0"><div className="w-[5px] h-px bg-[#444]" /></div>
);

const menus: [string, number][] = [["File",34.5],["Edit",35.5],["View",40.5],["Bookmarks",75.5],["Insert",44.5],["Selection",63.5],["Geoprocessing",94.5],["Customize",72.5],["Windows",65],["Help",40]];

export default function App() {
  return (
    <div className="w-[1921px] h-[1033px] overflow-hidden bg-[#f0f0f0] flex flex-col relative text-black text-[11.5px] font-['Noto_Sans','Open_Sans',sans-serif]">
      <div className="h-[23px] bg-white flex items-center shrink-0">
        <div className="w-[23px] pl-[3px]">
          <svg width="17" height="17" viewBox="0 0 18 18" className="block"><circle cx="8" cy="8" r="7" fill="#2f8f9f" stroke="#124a6a" strokeWidth="1.500" /><path d="M4 6c2-3 5-2 6 0s-2 3-3 4-3 0-3-4z" fill="#d8b34a" /><path d="M12 12l5 5" stroke="#123" strokeWidth="2" /></svg>
        </div>
        <span className="text-[#9a9a9a] text-[12px]">Untitled - ArcMap</span>
        <div className="ml-auto flex items-center h-full pr-[3px]">
          <div className="w-[44px] flex justify-center"><div className="w-[10px] h-px bg-[#888]" /></div>
          <div className="w-[44px] flex justify-center"><svg width="11" height="11" viewBox="0 0 11 11"><path d="M.5 2.500h8v8h-8zM2.500 2.500v-2h8v8h-2" fill="none" stroke="#888" /></svg></div>
          <div className="w-[47px] flex justify-center"><svg width="11" height="11" viewBox="0 0 11 11"><path d="M.5.500l10 10M10.500.500l-10 10" stroke="#777" /></svg></div>
        </div>
      </div>
      <div className="h-[24px] shrink-0 bg-[#f6f6f6] flex items-center pl-[12px] pt-[1px]">
        {menus.map(([m, w]) => <div key={m} className="shrink-0" style={{ width: w }}>{m}</div>)}
      </div>
      <div className="h-[26px] shrink-0 bg-[#f6f6f6] flex items-end pl-[3px]">
        <div className="h-[24px] w-[605px] bg-[#fafafa] flex items-center shrink-0">
          <Grip />
          <Btn n="new" /><Btn n="open" /><Btn n="save" /><Btn n="print" /><Sep />
          <Btn n="cut" /><Btn n="copy" /><Btn n="paste" /><Btn n="del" /><Sep />
          <Btn n="undo" /><Btn n="redo" /><Sep />
          <div className="w-[22px] h-[22px] bg-[#a9d3f3] border border-[#0078d7] flex items-center justify-center shrink-0">{Ic.add}</div>
          <div className="w-[11px] h-[22px] bg-[#a9d3f3] border border-l-0 border-[#0078d7] flex items-center justify-center shrink-0"><Caret /></div>
          <Sep />
          <div className="w-[148px] h-[21px] bg-white border border-[#a0a0a0] rounded-[2px] flex items-center justify-between pl-[3px] pr-[4px] shrink-0">
            <span className="text-[11px]">1:9,160,621</span><Chev />
          </div>
          <Sep />
          <Btn n="editor" active />
          <div className="w-[6px] shrink-0" />
          <Btn n="toc" /><Btn n="cat" /><Btn n="search" /><Btn n="tool" /><Btn n="py" /><Sep />
          <Btn n="model" />
        </div>
        <Overflow cls="h-[24px] mr-[4px]" />
        <div className="h-[24px] w-[406px] bg-[#fafafa] flex items-center shrink-0">
          <Grip w={8} />
          <span className="ml-[3px]">Editor</span>
          <div className="ml-[2px]"><Caret /></div>
          <Sep w={5} />
          <Btn n="e1" /><Btn n="e2" /><Sep />
          <Btn n="e3" /><Btn n="e4" /><Btn n="e5" />
          <div className="mx-[1px]"><Caret c="#b8b8b8" /></div>
          <Btn n="e6" /><Sep />
          <Btn n="e7" /><Btn n="e8" /><Btn n="e9" /><Btn n="e10" /><Btn n="e11" /><Sep />
          <Btn n="e12" /><Btn n="e13" /><Sep /><Btn n="e14" />
        </div>
        <Overflow cls="h-[24px]" />
      </div>
      <div className="h-[28px] shrink-0 bg-[#f6f6f6] flex items-center pl-[10px] relative">
        <div className="h-[26px] w-[513px] bg-[#fafafa] flex items-center shrink-0">
          <Grip w={5} />
          <Btn n="zin" /><Btn n="zout" /><Btn n="hand" active /><Btn n="globe" /><Sep />
          <Btn n="fin" /><Btn n="fout" /><Sep w={8} />
          <Btn n="back" /><Btn n="fwd" /><Sep w={7} />
          <Btn n="sel" /><div className="w-[9px] shrink-0 flex justify-center"><Caret /></div>
          <Btn n="clr" /><Sep w={7} />
          <Btn n="arrow" /><Sep w={4} />
          <Btn n="info" /><Btn n="light" /><Btn n="html" /><Sep w={5} />
          <Btn n="measure" /><Sep w={7} />
          <Btn n="bino" /><Btn n="route" />
          <div className="w-[22px] h-[22px] shrink-0 flex flex-col items-center justify-center leading-none text-[#1b5f9e] font-bold text-[9px] font-['Liberation_Sans',sans-serif]">
            <svg width="9" height="9" viewBox="0 0 9 9"><circle cx="4.500" cy="4.500" r="3.500" fill="none" stroke="#1b5f9e" /><circle cx="4.500" cy="4.500" r="1.300" fill="#1b5f9e" /></svg>
            <span>XY</span>
          </div>
          <Sep w={5} /><Btn n="time" /><Sep w={6} /><Btn n="viewer" />
        </div>
        <Overflow cls="h-[26px]" />
        <Dot cls="absolute left-[260px] top-[-2px] z-10" />
      </div>
      <div className="flex-1 flex min-h-0">
        <div className="w-[275px] shrink-0 flex flex-col">
          <div className="h-[19px] shrink-0 bg-gradient-to-r from-[#cddbea] to-[#d3dfec] flex items-center pl-[4px] pr-[4px] justify-between text-[11.3px]">
            <span>Table Of Contents</span>
            <div className="flex items-center gap-[6px]">
              <svg width="12" height="12" viewBox="0 0 12 12"><path d="M3.500 1.500h5v6h-5zM1.500 7.500h9M6 7.500V12M6.500 1.500v6" fill="none" stroke="#111" /></svg>
              <svg width="10" height="10" viewBox="0 0 10 10"><path d="M1 1l8 8M9 1L1 9" stroke="#111" strokeWidth="1.500" /></svg>
            </div>
          </div>
          <div className="h-[26px] shrink-0 bg-[#f8f8f8] flex items-center pl-[4px]">
            <Btn n="t1" active /><Btn n="t2" /><Btn n="t3" /><Btn n="t4" /><Sep /><Btn n="t5" />
          </div>
          <div className="flex-1 bg-white border-2 border-[#8a8f96] pl-[8px] flex flex-col">
            <div className="h-[18px] flex items-center">
              <Minus />
              <div className="ml-[6px]">{Ic.layers}</div>
              <span className="ml-[2px] font-bold text-[11px]">Layers</span>
            </div>
            <div className="h-[18px] flex items-center pl-[19px]">
              <Minus />
              <div className="ml-[8px] w-[12px] h-[12px] border border-[#333] bg-white flex items-center justify-center shrink-0">
                <svg width="10" height="10" viewBox="0 0 10 10"><path d="M1.500 5l2.500 3 4.500-6.500" fill="none" stroke="#000" strokeWidth="1.600" /></svg>
              </div>
              <span className="ml-[4px] bg-[#0078d7] text-white h-[18px] w-[99px] flex items-center justify-center text-[11.2px]">municipios202110</span>
              <Dot cls="ml-[2px]" />
            </div>
            <div className="h-[14px] flex items-center pl-[49px] mt-[1px]">
              <div className="w-[15px] h-[11px] bg-[#c8f2d2] border border-[#777]" />
            </div>
          </div>
        </div>
        <div className="w-[4px] shrink-0" />
        <div className="w-[1602px] shrink-0 flex flex-col">
          <div className="flex-1 relative bg-white border-t-2 border-l-2 border-[#808080] overflow-hidden min-h-0">
            <MapDrawing />
            <div className="absolute left-[41px] top-[467px] w-[491px] h-[328px] rounded-[8px] border border-[#b8b8b8] bg-[#efefef] overflow-hidden flex flex-col text-[11px]">
              <div className="h-[26px] bg-white flex items-center justify-between pl-[2px] pr-[9px] shrink-0">
                <span className="text-[#9a9a9a] text-[11.5px]">Add Data</span>
                <svg width="11" height="11" viewBox="0 0 11 11"><path d="M.5.500l10 10M10.500.500l-10 10" stroke="#888" /></svg>
              </div>
              <div className="h-[32px] flex items-center pl-[4px] shrink-0">
                <span className="w-[59px] shrink-0 mb-[2px]">Look in:</span>
                <div className="w-[194px] h-[22px] bg-[#f8f8f8] border border-[#d8d8d8] rounded-[2px] flex items-center pl-[3px] pr-[3px] shrink-0">
                  <S s={16}><Folder /></S>
                  <span className="ml-[2px]">Datos</span>
                  <Dot cls="ml-[11px]" />
                  <div className="ml-auto"><Chev /></div>
                </div>
                <div className="w-[5px] shrink-0" />
                <Btn n="up" /><Btn n="home" w={23} /><Btn n="gdbh" w={24} /><Sep w={4} />
                <Btn n="list" w={30} /><Caret /><Sep w={12} />
                <Btn n="conn" w={20} /><Sep w={8} />
                <Btn n="nfold" w={25} /><Btn n="ndb" w={23} /><Btn n="ntool" w={23} />
              </div>
              <div className="ml-[4px] mr-[6px] h-[188px] bg-white border-t-2 border-l-2 border-[#777] border-r border-b border-r-[#e4e4e4] border-b-[#e4e4e4] pl-[1px] pt-[1px] shrink-0">
                <div className="flex items-center h-[17px]">
                  {Ic.shp}
                  <span className="ml-[1px] text-[11.2px]">municipios202110.shp</span>
                  <Dot cls="ml-[6px] mt-[5px]" />
                </div>
              </div>
              <div className="flex pl-[7px] pr-[12px] mt-[12px]">
                <div className="w-[82px] shrink-0 flex flex-col">
                  <span className="h-[28px]">Name:</span>
                  <span>Show of type:</span>
                </div>
                <div className="w-[289px] shrink-0 flex flex-col gap-[9px] pt-[2px]">
                  <div className="h-[19px] bg-white border border-[#e0e0e0] border-b-[#7a7a7a]" />
                  <div className="h-[20px] bg-[#f8f8f8] border border-[#e0e0e0] rounded-[1px] flex items-center justify-between pl-[2px] pr-[3px]">
                    <span className="text-[10.8px]">Datasets, Layers and Results</span><Chev />
                  </div>
                </div>
                <div className="ml-auto w-[72px] flex flex-col gap-[7px]">
                  <div className="h-[21px] bg-[#f8f8f8] border border-[#cfcfcf] rounded-[3px] flex items-center pl-[26px]"><span>Add</span><Dot cls="ml-[8px] mb-[2px]" /></div>
                  <div className="h-[21px] bg-[#f8f8f8] border border-[#cfcfcf] rounded-[3px] flex items-center justify-center">Cancel</div>
                </div>
              </div>
            </div>
          </div>
          <div className="h-[19px] shrink-0 border-t border-b border-[#fafafa] border-l-2 border-l-[#808080] flex items-center pl-[2px]">
            <div className="w-[16px] h-[15px] rounded-[2px] bg-[#bfe0f8] flex items-center justify-center shrink-0">{Ic.view1}</div>
            <div className="w-[16px] h-[15px] flex items-center justify-center shrink-0">{Ic.view2}</div>
            <div className="w-px h-[13px] bg-[#aaa] ml-[3px] mr-[5px]" />
            <div className="w-[16px] flex justify-center shrink-0">{Ic.refresh}</div>
            <div className="w-[16px] ml-[1px] flex justify-center shrink-0">{Ic.pause}</div>
            <div className="ml-[16px] w-[1488px] h-[2px] bg-[#808080] shrink-0" />
          </div>
        </div>
        <div className="flex-1 flex min-w-0">
          <div className="w-[17px] shrink-0 border-t-2 border-[#808080] pt-[16px] flex justify-center">
            <div className="w-[2px] h-[881px] bg-[#808080]" />
          </div>
          <div className="flex-1 flex flex-col items-end">
            <div className="w-[21px] h-[116px] mt-[1px] border border-r-0 border-[#999] rounded-l-[4px] flex flex-col items-center pt-[3px]">
              {Ic.feat}
              <span className="[writing-mode:vertical-rl] whitespace-nowrap mt-[3px] text-[#555] text-[12px] leading-[18px]">Create Features</span>
            </div>
            <div className="w-[21px] h-[71px] mt-[14px] border border-r-0 border-[#999] rounded-l-[4px] flex flex-col items-center pt-[3px]">
              {Ic.cat}
              <span className="[writing-mode:vertical-rl] whitespace-nowrap mt-[1px] text-[#555] text-[12px] leading-[18px]">Catalog</span>
            </div>
          </div>
        </div>
      </div>
      <div className="h-[22px] shrink-0 bg-[#efefef]" />
    </div>
  );
}
